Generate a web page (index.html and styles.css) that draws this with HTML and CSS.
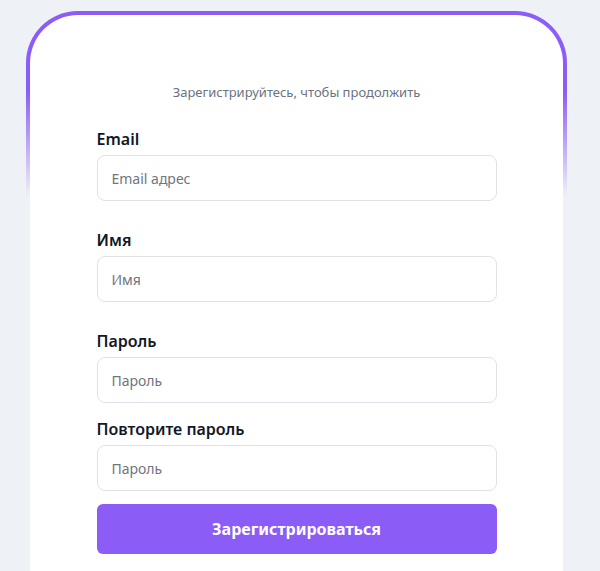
FILE: index.html
```html
<html>

<head>
    <title>Регистрация</title>
    <link rel="stylesheet" href="styles.css">
</head>

<body>
    <div class="frame">
        <div class="card">
            <p class="subtitle">Зарегистрируйтесь, чтобы продолжить</p>
            <form class="form">
                <div class="group group-spaced">
                    <label class="label" for="email">Email</label>
                    <input class="field" id="email" type="text" placeholder="Email адрес">
                </div>
                <div class="group group-spaced">
                    <label class="label" for="name">Имя</label>
                    <input class="field" id="name" type="text" placeholder="Имя">
                </div>
                <div class="group group-mid">
                    <label class="label" for="pass">Пароль</label>
                    <input class="field" id="pass" type="password" placeholder="Пароль">
                </div>
                <div class="group">
                    <label class="label" for="pass2">Повторите пароль</label>
                    <input class="field" id="pass2" type="password" placeholder="Пароль">
                </div>
                <button type="button" class="submit">Зарегистрироваться</button>
            </form>
        </div>
    </div>
</body>

</html>
```

FILE: styles.css
```css
body {
    margin: 0;
    background: #eef1f6;
    font-family: "Noto Sans", "Open Sans", sans-serif;
    overflow: hidden;
}

.frame {
    width: 533px;
    margin: 11px 0 0 26px;
    padding: 4px 4px 0 4px;
    border-radius: 52px 52px 0 0;
    background: linear-gradient(to bottom, #8b5cf6 0px, #8b5cf6 80px, rgba(139, 92, 246, 0) 185px);
}

.card {
    box-sizing: border-box;
    height: 556px;
    background: #ffffff;
    border-radius: 48px 48px 0 0;
    padding-top: 67px;
}

.subtitle {
    margin: 0 0 25px 0;
    text-align: center;
    font-size: 13px;
    line-height: 20px;
    color: #6b7280;
}

.form {
    width: 400px;
    margin: 0 auto;
}

.group {
    margin-bottom: 13px;
}

.group-mid {
    margin-bottom: 14px;
}

.group-spaced {
    margin-bottom: 27px;
}

.label {
    display: block;
    margin-bottom: 4px;
    font-size: 16px;
    line-height: 24px;
    font-weight: 600;
    color: #111827;
}

.field {
    display: block;
    box-sizing: border-box;
    width: 100%;
    height: 46px;
    padding: 0 14px;
    border: 1px solid #dfe2e8;
    border-radius: 8px;
    font-family: inherit;
    font-size: 14px;
    color: #111827;
    outline: none;
}

.field::placeholder {
    color: #70757e;
}

.submit {
    display: block;
    width: 100%;
    height: 50px;
    border: none;
    border-radius: 6px;
    background: #8b5cf6;
    color: #ffffff;
    font-family: inherit;
    font-size: 16px;
    font-weight: 700;
}
```
